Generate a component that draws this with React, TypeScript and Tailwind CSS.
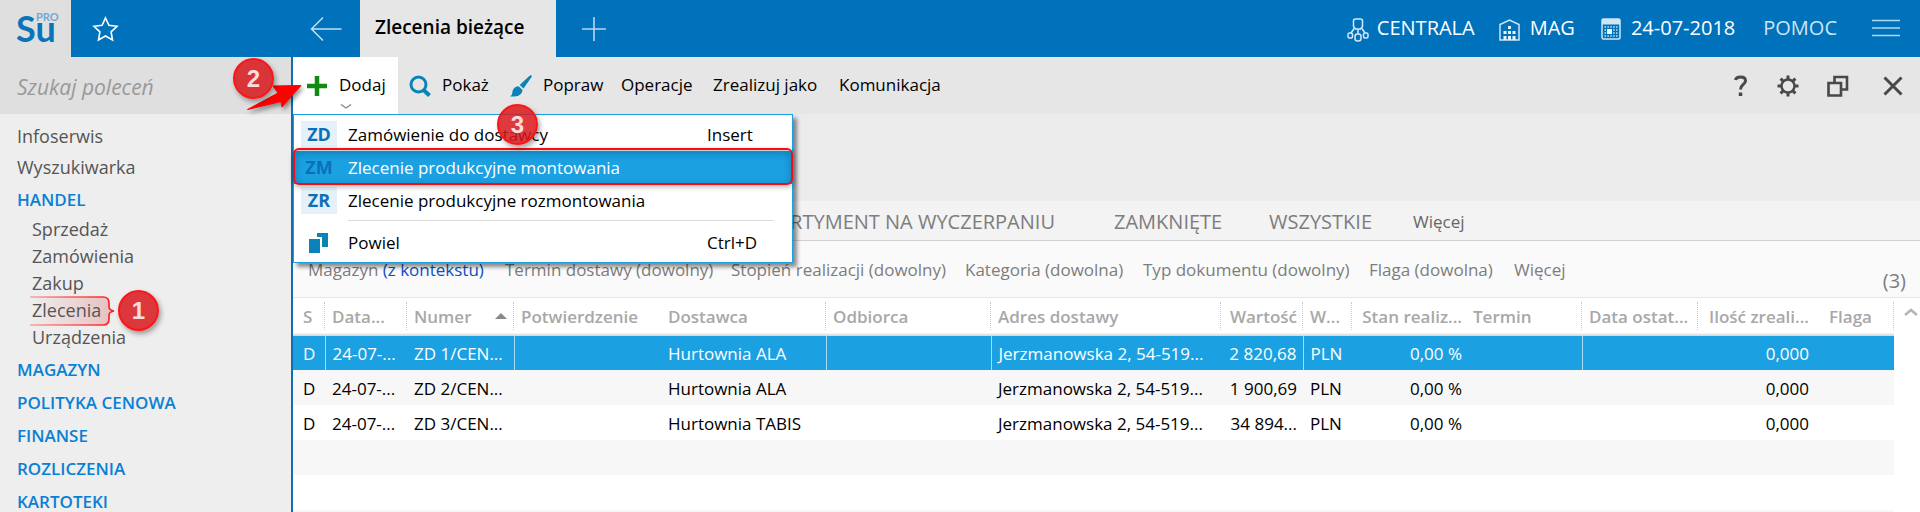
import type { ReactNode } from "react";

type Order = {
  status: string;
  date: string;
  number: string;
  supplier: string;
  address: string;
  value: string;
  currency: string;
  progress: string;
  quantity: string;
};

const orders: Order[] = [
  { status: "D", date: "24-07-...", number: "ZD 1/CEN...", supplier: "Hurtownia ALA", address: "Jerzmanowska 2, 54-519...", value: "2 820,68", currency: "PLN", progress: "0,00 %", quantity: "0,000" },
  { status: "D", date: "24-07-...", number: "ZD 2/CEN...", supplier: "Hurtownia ALA", address: "Jerzmanowska 2, 54-519...", value: "1 900,69", currency: "PLN", progress: "0,00 %", quantity: "0,000" },
  { status: "D", date: "24-07-...", number: "ZD 3/CEN...", supplier: "Hurtownia TABIS", address: "Jerzmanowska 2, 54-519...", value: "34 894...", currency: "PLN", progress: "0,00 %", quantity: "0,000" },
];

const columns = [
  { label: "S", width: "w-[32px]", pad: "pl-[10px]", dotted: true, line: true },
  { label: "Data...", width: "w-[82px]", pad: "pl-[7px]", dotted: true },
  { label: "Numer", width: "w-[107px]", pad: "pl-[7px]", dotted: true, line: true, sorted: true },
  { label: "Potwierdzenie", width: "w-[147px]", pad: "pl-[7px]" },
  { label: "Dostawca", width: "w-[165px]", pad: "pl-[7px]", dotted: true, line: true },
  { label: "Odbiorca", width: "w-[165px]", pad: "pl-[7px]", dotted: true, line: true },
  { label: "Adres dostawy", width: "w-[230px]", pad: "pl-[7px]", dotted: true },
  { label: "Wartość", width: "w-[82px]", pad: "pr-1.5 text-right", dotted: true, line: true },
  { label: "W...", width: "w-[49px]", pad: "pl-[7px]", dotted: true },
  { label: "Stan realiz...", width: "w-[114px]", pad: "pr-1 text-right" },
  { label: "Termin", width: "w-[116px]", pad: "pl-[7px]", dotted: true, line: true },
  { label: "Data ostat...", width: "w-[116px]", pad: "pl-[7px]", dotted: true },
  { label: "Ilość zreali...", width: "w-[115px]", pad: "pr-1 text-right" },
  { label: "Flaga", width: "w-auto", pad: "pl-4", dotted: true },
];

const groups = ["MAGAZYN", "POLITYKA CENOWA", "FINANSE", "ROZLICZENIA", "KARTOTEKI"];
const trade = ["Sprzedaż", "Zamówienia", "Zakup", "Zlecenia", "Urządzenia"];

export default function App() {
  return (
    <div className="flex h-screen flex-col overflow-hidden bg-white font-['Open_Sans','Noto_Sans',sans-serif] text-[17px] leading-6 text-black">
      <TopBar />
      <div className="flex min-h-0 flex-1">
        <Sidebar />
        <main className="flex min-w-0 flex-1 flex-col border-l-2 border-[#0f6fb0]">
          <Toolbar />
          <div className="h-[87px] shrink-0 bg-[#ececec]" />
          <ViewTabs />
          <Filters />
          <OrdersTable />
        </main>
      </div>
    </div>
  );
}

function TopBar() {
  return (
    <header className="flex h-[57px] shrink-0 items-stretch bg-[#0072bb] text-white">
      <div className="relative w-[71px] bg-[#dfdfdf] font-['Lato',sans-serif] text-[#0a74ba]">
        <span className="block pl-4 pt-[7px] text-[36px] font-bold leading-[42px]">Su</span>
        <span className="absolute left-[36px] top-[10px] text-[11px] font-bold leading-[14px] text-[#6fa9d2]">PRO</span>
      </div>
      <button type="button" aria-label="Ulubione" className="ml-[21px] w-7">
        <StarIcon />
      </button>
      <div className="flex w-[240px] justify-end pr-[18px]">
        <button type="button" aria-label="Wstecz">
          <BackIcon />
        </button>
      </div>
      <button type="button" className="w-[196px] bg-[#e6e6e6] pb-1 pl-[15px] text-left text-[19px] font-semibold text-black">
        Zlecenia bieżące
      </button>
      <button type="button" aria-label="Nowa karta" className="pl-[26px]">
        <TabPlusIcon />
      </button>
      <div className="ml-auto flex items-center pb-[2px] pr-5 text-[20px]">
        <button type="button" className="flex items-center gap-2">
          <BranchIcon />
          CENTRALA
        </button>
        <button type="button" className="ml-6 flex items-center gap-[10px]">
          <WarehouseIcon />
          MAG
        </button>
        <button type="button" className="ml-[26px] flex items-center gap-[10px]">
          <CalendarIcon />
          24-07-2018
        </button>
        <a href="#pomoc" className="ml-7 text-[#cfe3f2]">
          POMOC
        </a>
        <button type="button" aria-label="Menu" className="ml-[35px]">
          <MenuIcon />
        </button>
      </div>
    </header>
  );
}

function Sidebar() {
  return (
    <aside className="relative w-[291px] shrink-0 bg-[#eeeeee] text-[#555]">
      <input
        type="text"
        aria-label="Szukaj poleceń"
        placeholder="Szukaj poleceń"
        className="block h-[57px] w-full bg-[#dfdfdf] pb-0.5 pl-[17px] pt-1 text-[21px] italic outline-none placeholder:text-[#999]"
      />
      <nav className="pt-[7px] text-[18px]">
        <a href="#infoserwis" className="block pl-[17px] leading-[31px]">Infoserwis</a>
        <a href="#wyszukiwarka" className="block pl-[17px] leading-[31px]">Wyszukiwarka</a>
        <a href="#handel" className="block pl-[17px] text-[17px] font-semibold leading-[33px] text-[#0a80d4]">HANDEL</a>
        <ul className="pb-[2px]">
          {trade.map((name) => (
            <li key={name} className="relative pl-8 leading-[27px]">
              {name === "Zlecenia" && <Bracket />}
              <a href="#handel" className="relative">{name}</a>
              {name === "Zlecenia" && (
                <span className="absolute left-[118px] top-[-7px]">
                  <Marker>1</Marker>
                </span>
              )}
            </li>
          ))}
        </ul>
        {groups.map((name) => (
          <a key={name} href="#grupa" className="block pl-[17px] text-[17px] font-semibold leading-[33px] text-[#0a80d4]">
            {name}
          </a>
        ))}
      </nav>
      <div className="absolute left-[233px] top-[1px] z-30">
        <ArrowPointer />
        <Marker>2</Marker>
      </div>
    </aside>
  );
}

function Toolbar() {
  return (
    <div className="relative flex h-[57px] shrink-0 items-stretch bg-[#e6e6e6]">
      <button type="button" className="relative flex w-[105px] items-center gap-3 bg-white pl-[14px]">
        <AddIcon />
        <span className="pb-[2px]">Dodaj</span>
        <svg className="absolute bottom-[4px] left-[47px] h-[7px] w-3" viewBox="0 0 12 7" fill="none" stroke="#888" strokeWidth="1.4" aria-hidden>
          <path d="M1 1.5l5 3.5 5-3.5" />
        </svg>
      </button>
      <button type="button" className="ml-[11px] flex w-[101px] items-center gap-[11px]">
        <SearchIcon />
        <span className="pb-[2px]">Pokaż</span>
      </button>
      <button type="button" className="flex w-[111px] items-center gap-[11px]">
        <BrushIcon />
        <span className="pb-[2px]">Popraw</span>
      </button>
      <button type="button" className="w-[92px] pb-[2px] text-left">Operacje</button>
      <button type="button" className="w-[126px] pb-[2px] text-left">Zrealizuj jako</button>
      <button type="button" className="pb-[2px] text-left">Komunikacja</button>
      <div className="ml-auto flex items-center pr-[17px]">
        <button type="button" aria-label="Pomoc" className="mr-[29px]"><HelpIcon /></button>
        <button type="button" aria-label="Ustawienia" className="mr-7"><GearIcon /></button>
        <button type="button" aria-label="Okna" className="mr-[34px]"><WindowsIcon /></button>
        <button type="button" aria-label="Zamknij"><CloseIcon /></button>
      </div>
      <AddMenu />
    </div>
  );
}

function AddMenu() {
  return (
    <div role="menu" className="absolute left-0 top-[57px] z-20 w-[500px] border border-[#1ba1e2] bg-white pb-[3px] pt-[3px] shadow-[4px_4px_4px_rgba(0,0,0,0.45)]">
      <MenuItem code="ZD" label="Zamówienie do dostawcy" shortcut="Insert" />
      <div className="relative">
        <MenuItem code="ZM" label="Zlecenie produkcyjne montowania" active />
        <div className="pointer-events-none absolute -left-px -right-px -bottom-px -top-[3px] rounded-[6px] border-2 border-[#f00f14] shadow-[inset_0_3px_8px_rgba(0,40,70,0.3),0_2px_5px_rgba(0,0,0,0.3)]" />
      </div>
      <MenuItem code="ZR" label="Zlecenie produkcyjne rozmontowania" />
      <hr className="mb-[5px] ml-[54px] mr-[18px] mt-[3px] border-t border-[#dcdcdc]" />
      <button type="button" role="menuitem" className="flex h-[33px] w-full items-center pl-[15px] text-left">
        <CopyIcon />
        <span className="ml-5 w-[359px]">Powiel</span>
        <span>Ctrl+D</span>
      </button>
      <span className="absolute left-[203px] top-[-11px]">
        <Marker>3</Marker>
      </span>
    </div>
  );
}

function MenuItem({ code, label, shortcut, active }: { code: string; label: string; shortcut?: string; active?: boolean }) {
  return (
    <button
      type="button"
      role="menuitem"
      className={`flex h-[33px] w-full items-center pl-[7px] text-left ${active ? "bg-[#1ba1e2] text-white" : ""}`}
    >
      <span className={`w-9 text-center text-[18px] font-bold leading-[27px] text-[#0a70b8] ${active ? "" : "bg-[#e5f1f9]"}`}>{code}</span>
      <span className="ml-[11px] w-[359px]">{label}</span>
      <span>{shortcut}</span>
    </button>
  );
}

function ViewTabs() {
  return (
    <div className="flex h-10 shrink-0 items-center border-b border-[#d2d2d2] bg-[#f3f3f3] pt-[2px] text-[20px] text-[#7d7d7d]">
      <div className="w-[762px] text-right">
        <button type="button">ASORTYMENT NA WYCZERPANIU</button>
      </div>
      <button type="button" className="ml-[59px] w-[155px] text-left">ZAMKNIĘTE</button>
      <button type="button" className="w-[144px] text-left">WSZYSTKIE</button>
      <button type="button" className="text-[17px] text-[#666]">Więcej</button>
    </div>
  );
}

function Filters() {
  return (
    <div className="flex h-[57px] shrink-0 items-center border-b border-[#e6e6e6] bg-[#fafafa] pl-[15px] pt-px text-[#7d7d7d]">
      <button type="button" className="w-[197px] text-left">
        Magazyn <span className="text-[#0b4fc4]">(z kontekstu)</span>
      </button>
      <button type="button" className="w-[226px] text-left">Termin dostawy (dowolny)</button>
      <button type="button" className="w-[234px] text-left">Stopień realizacji (dowolny)</button>
      <button type="button" className="w-[178px] text-left">Kategoria (dowolna)</button>
      <button type="button" className="w-[226px] text-left">Typ dokumentu (dowolny)</button>
      <button type="button" className="w-[145px] text-left">Flaga (dowolna)</button>
      <button type="button">Więcej</button>
      <span className="ml-auto self-end pb-1 pr-[14px] text-[20px]">(3)</span>
    </div>
  );
}

function OrdersTable() {
  return (
    <div className="flex min-h-0 flex-1 overflow-hidden">
      <div className="min-w-0 flex-1">
        <table className="w-full table-fixed border-collapse whitespace-nowrap">
          <thead>
            <tr className="h-[38px] text-left text-[#a8a8a8] shadow-[inset_0_-3px_2px_-1px_#dadada]">
              {columns.map((c) => (
                <th key={c.label} scope="col" className={`relative py-0 font-semibold ${c.width} ${c.pad}`}>
                  {c.label}
                  {c.sorted && <span className="absolute right-[7px] top-[15px] border-x-[6px] border-b-[6px] border-x-transparent border-b-[#888]" />}
                  {c.dotted && <span className="absolute right-0 top-1 h-[28px] border-r border-dotted border-[#ccc]" />}
                </th>
              ))}
            </tr>
          </thead>
          <tbody>
            {orders.map((o, row) => {
              const cells = [o.status, o.date, o.number, "", o.supplier, "", o.address, o.value, o.currency, o.progress, "", "", o.quantity, ""];
              return (
                <tr key={o.number} className={row === 0 ? "h-[34px] bg-[#1ba1e2] text-white" : row === 1 ? "h-[35px] bg-[#f7f7f7]" : "h-[35px] bg-white"}>
                  {cells.map((text, i) => (
                    <td
                      key={columns[i].label}
                      className={`pb-0 pt-[2px] ${columns[i].pad} ${row === 0 && columns[i].line ? "border-r border-[#a9dcf4]" : ""}`}
                    >
                      {text}
                    </td>
                  ))}
                </tr>
              );
            })}
            <tr className="h-[35px] bg-[#f7f7f7]"><td colSpan={14} /></tr>
            <tr className="h-[35px] bg-white"><td colSpan={14} /></tr>
            <tr className="h-[35px] bg-[#f7f7f7]"><td colSpan={14} /></tr>
          </tbody>
        </table>
      </div>
      <div className="w-[26px] shrink-0 bg-white">
        <svg className="ml-[10px] mt-[10px] h-2 w-[14px]" viewBox="0 0 14 8" fill="none" stroke="#b5b5b5" strokeWidth="2.5" aria-hidden>
          <path d="M1 7l6-5 6 5" />
        </svg>
      </div>
    </div>
  );
}

function Marker({ children }: { children: ReactNode }) {
  return (
    <span className="relative flex h-[41px] w-[41px] items-center justify-center rounded-full border-2 border-[#fb1518] bg-[#d8181c]/85 font-['Liberation_Sans',sans-serif] text-[24px] font-bold leading-none text-[#fbdcdc] shadow-[2px_3px_5px_rgba(0,0,0,0.35)]">
      {children}
    </span>
  );
}

function Bracket() {
  return (
    <svg className="absolute left-[30px] top-[-1px] h-[30px] w-[86px]" viewBox="0 0 86 30" fill="none" aria-hidden>
      <defs>
        <linearGradient id="bracketFill" x1="0" x2="1">
          <stop offset="0" stopColor="#e01b1b" stopOpacity="0" />
          <stop offset="1" stopColor="#c01b1b" stopOpacity="0.22" />
        </linearGradient>
        <linearGradient id="bracketLine" gradientUnits="userSpaceOnUse" x1="0" x2="80" y1="0" y2="0">
          <stop offset="0" stopColor="#f22" stopOpacity="0.35" />
          <stop offset="1" stopColor="#f22" />
        </linearGradient>
      </defs>
      <path d="M0 1h73q6 0 6 6v4q0 3 5 4-5 1-5 4v4q0 6-6 6H0z" fill="url(#bracketFill)" />
      <path d="M0 1h73q6 0 6 6v4q0 3 5 4-5 1-5 4v4q0 6-6 6H0" stroke="url(#bracketLine)" strokeWidth="1.7" />
    </svg>
  );
}

function ArrowPointer() {
  return (
    <svg className="absolute left-[13px] top-[18px] h-[40px] w-[60px] drop-shadow-[2px_3px_2px_rgba(0,0,0,0.4)]" viewBox="0 0 60 40" aria-hidden>
      <path d="M1.5 33.5L32 17l-5-7 28-.5-19 21.5-1-5.5z" fill="#fe0000" stroke="#fe0000" strokeLinejoin="round" />
    </svg>
  );
}

function StarIcon() {
  return (
    <svg className="h-7 w-7" viewBox="0 0 28 28" fill="none" stroke="white" strokeWidth="1.6" aria-hidden>
      <path d="M13.5 3l3.4 7.3 8.1 1-5.9 5.6 1.4 8.1-7-4-7 4 1.4-8.1L2 11.3l8.1-1z" />
    </svg>
  );
}

function BackIcon() {
  return (
    <svg className="h-6 w-8" viewBox="0 0 32 24" fill="none" stroke="#c4dff0" strokeWidth="1.5" aria-hidden>
      <path d="M31.5 12H1.5M13 .5L1.5 12 13 23.5" />
    </svg>
  );
}

function TabPlusIcon() {
  return (
    <svg className="h-6 w-6" viewBox="0 0 24 24" fill="none" stroke="#b5d7ee" strokeWidth="1.6" aria-hidden>
      <path d="M12 0v24M0 12h24" />
    </svg>
  );
}

function BranchIcon() {
  return (
    <svg className="mt-1 h-6 w-[22px]" viewBox="0 0 22 24" fill="none" stroke="#d5e8f5" strokeWidth="1.5" aria-hidden>
      <path d="M8.500 1h5q2 0 2 2v5.500L13.500 11h-5l-2-2.500V3q0-2 2-2z" />
      <path d="M7.500 10L4 15M14.500 10l3.500 5M11 11v5" />
      <rect x="1" y="15" width="4.5" height="5" rx="1.5" />
      <rect x="16.5" y="15" width="4.5" height="5" rx="1.5" />
      <rect x="8" y="16" width="6" height="7" rx="2.5" />
    </svg>
  );
}

function WarehouseIcon() {
  return (
    <svg className="mt-1 h-6 w-[21px]" viewBox="0 0 21 24" fill="none" aria-hidden>
      <path d="M1 22V6.5L10.500 2 20 6.500V22z" stroke="#cfe5f4" strokeWidth="1.5" />
      <path d="M9 8h3v3H9zM4.500 13h3v3h-3zM9 13h3v3H9zM13.500 13h3v3h-3zM4.500 18h3v4h-3zM9 18h3v4H9zM13.500 18h3v4h-3z" fill="#e5f2fa" />
    </svg>
  );
}

function CalendarIcon() {
  return (
    <svg className="mt-0.5 h-6 w-5" viewBox="0 0 20 24" fill="none" aria-hidden>
      <rect x="1" y="2" width="18" height="20" rx="1.5" stroke="#cfe5f4" strokeWidth="1.5" />
      <path d="M1 2h18v5.5H1z" fill="#cfe5f4" />
      <path d="M3.500 10h13M3.500 13h13M3.500 16h13M3.500 19h13" stroke="#cfe5f4" strokeWidth="1.5" strokeDasharray="1.500 1.400" />
      <path d="M6 12h5v5H6z" fill="#e9f4fb" />
    </svg>
  );
}

function MenuIcon() {
  return (
    <svg className="h-[18px] w-7" viewBox="0 0 28 18" stroke="#b5d7ee" strokeWidth="1.5" aria-hidden>
      <path d="M0 1.5h28M0 9h28M0 16.5h28" />
    </svg>
  );
}

function AddIcon() {
  return (
    <svg className="h-5 w-5" viewBox="0 0 20 20" fill="none" stroke="#128a12" strokeWidth="4.5" aria-hidden>
      <path d="M10 0v20M0 10h20" />
    </svg>
  );
}

function SearchIcon() {
  return (
    <svg className="h-[22px] w-[22px]" viewBox="0 0 22 22" fill="none" stroke="#0a84b8" aria-hidden>
      <circle cx="9.5" cy="9.5" r="7.5" strokeWidth="3" />
      <path d="M14.5 15l6 5.5" strokeWidth="4" />
    </svg>
  );
}

function BrushIcon() {
  return (
    <svg className="h-[22px] w-[22px]" viewBox="0 0 22 22" fill="#0a84b8" aria-hidden>
      <path d="M21.5.5c.4.5.2 1.2-.3 2l-7.7 11-3.8-3.6L19.3 1c.8-.6 1.7-1 2.2-.5z" />
      <path d="M8.6 11.2l3.8 3.6c.3 3.2-2.5 6-6.2 6.4-2 .3-4.2.4-6.2.1 2-.8 2.1-2 2.4-4.3.4-3 2.700-5.700 6.200-5.800z" />
    </svg>
  );
}

function HelpIcon() {
  return (
    <svg className="h-[22px] w-[14px]" viewBox="0 0 14 22" fill="none" stroke="#484848" strokeWidth="3" aria-hidden>
      <path d="M1.5 5C2 3 4 2 6.5 2c3 0 5 1.3 5 3.8 0 3.7-5 3.7-5 8.7" />
      <path d="M6.5 17.5v3.5" strokeWidth="3.5" />
    </svg>
  );
}

function GearIcon() {
  return (
    <svg className="h-[22px] w-[22px]" viewBox="0 0 22 22" fill="none" stroke="#484848" aria-hidden>
      <circle cx="11" cy="11" r="6.5" strokeWidth="2.4" />
      <path
        d="M11 .5v4M11 17.5v4M.5 11h4M17.5 11h4M3.6 3.6l2.8 2.8M15.6 15.6l2.8 2.8M3.6 18.4l2.8-2.8M15.6 6.4l2.8-2.8"
        strokeWidth="3"
      />
    </svg>
  );
}

function WindowsIcon() {
  return (
    <svg className="h-[22px] w-[22px]" viewBox="0 0 22 22" fill="none" stroke="#484848" strokeWidth="2.6" aria-hidden>
      <path d="M7.5 8V2H20v12.5h-6" />
      <path d="M1.5 8H14v12.5H1.5z" />
    </svg>
  );
}

function CloseIcon() {
  return (
    <svg className="h-5 w-5" viewBox="0 0 20 20" fill="none" stroke="#484848" strokeWidth="3" aria-hidden>
      <path d="M1.5 1.5l17 17M18.5 1.5l-17 17" />
    </svg>
  );
}

function CopyIcon() {
  return (
    <svg className="h-5 w-[19px]" viewBox="0 0 19 20" fill="#0a84b8" aria-hidden>
      <path d="M8 0h11v14h-6V4H8z" />
      <path d="M0 6h11v14H0z" />
    </svg>
  );
}
